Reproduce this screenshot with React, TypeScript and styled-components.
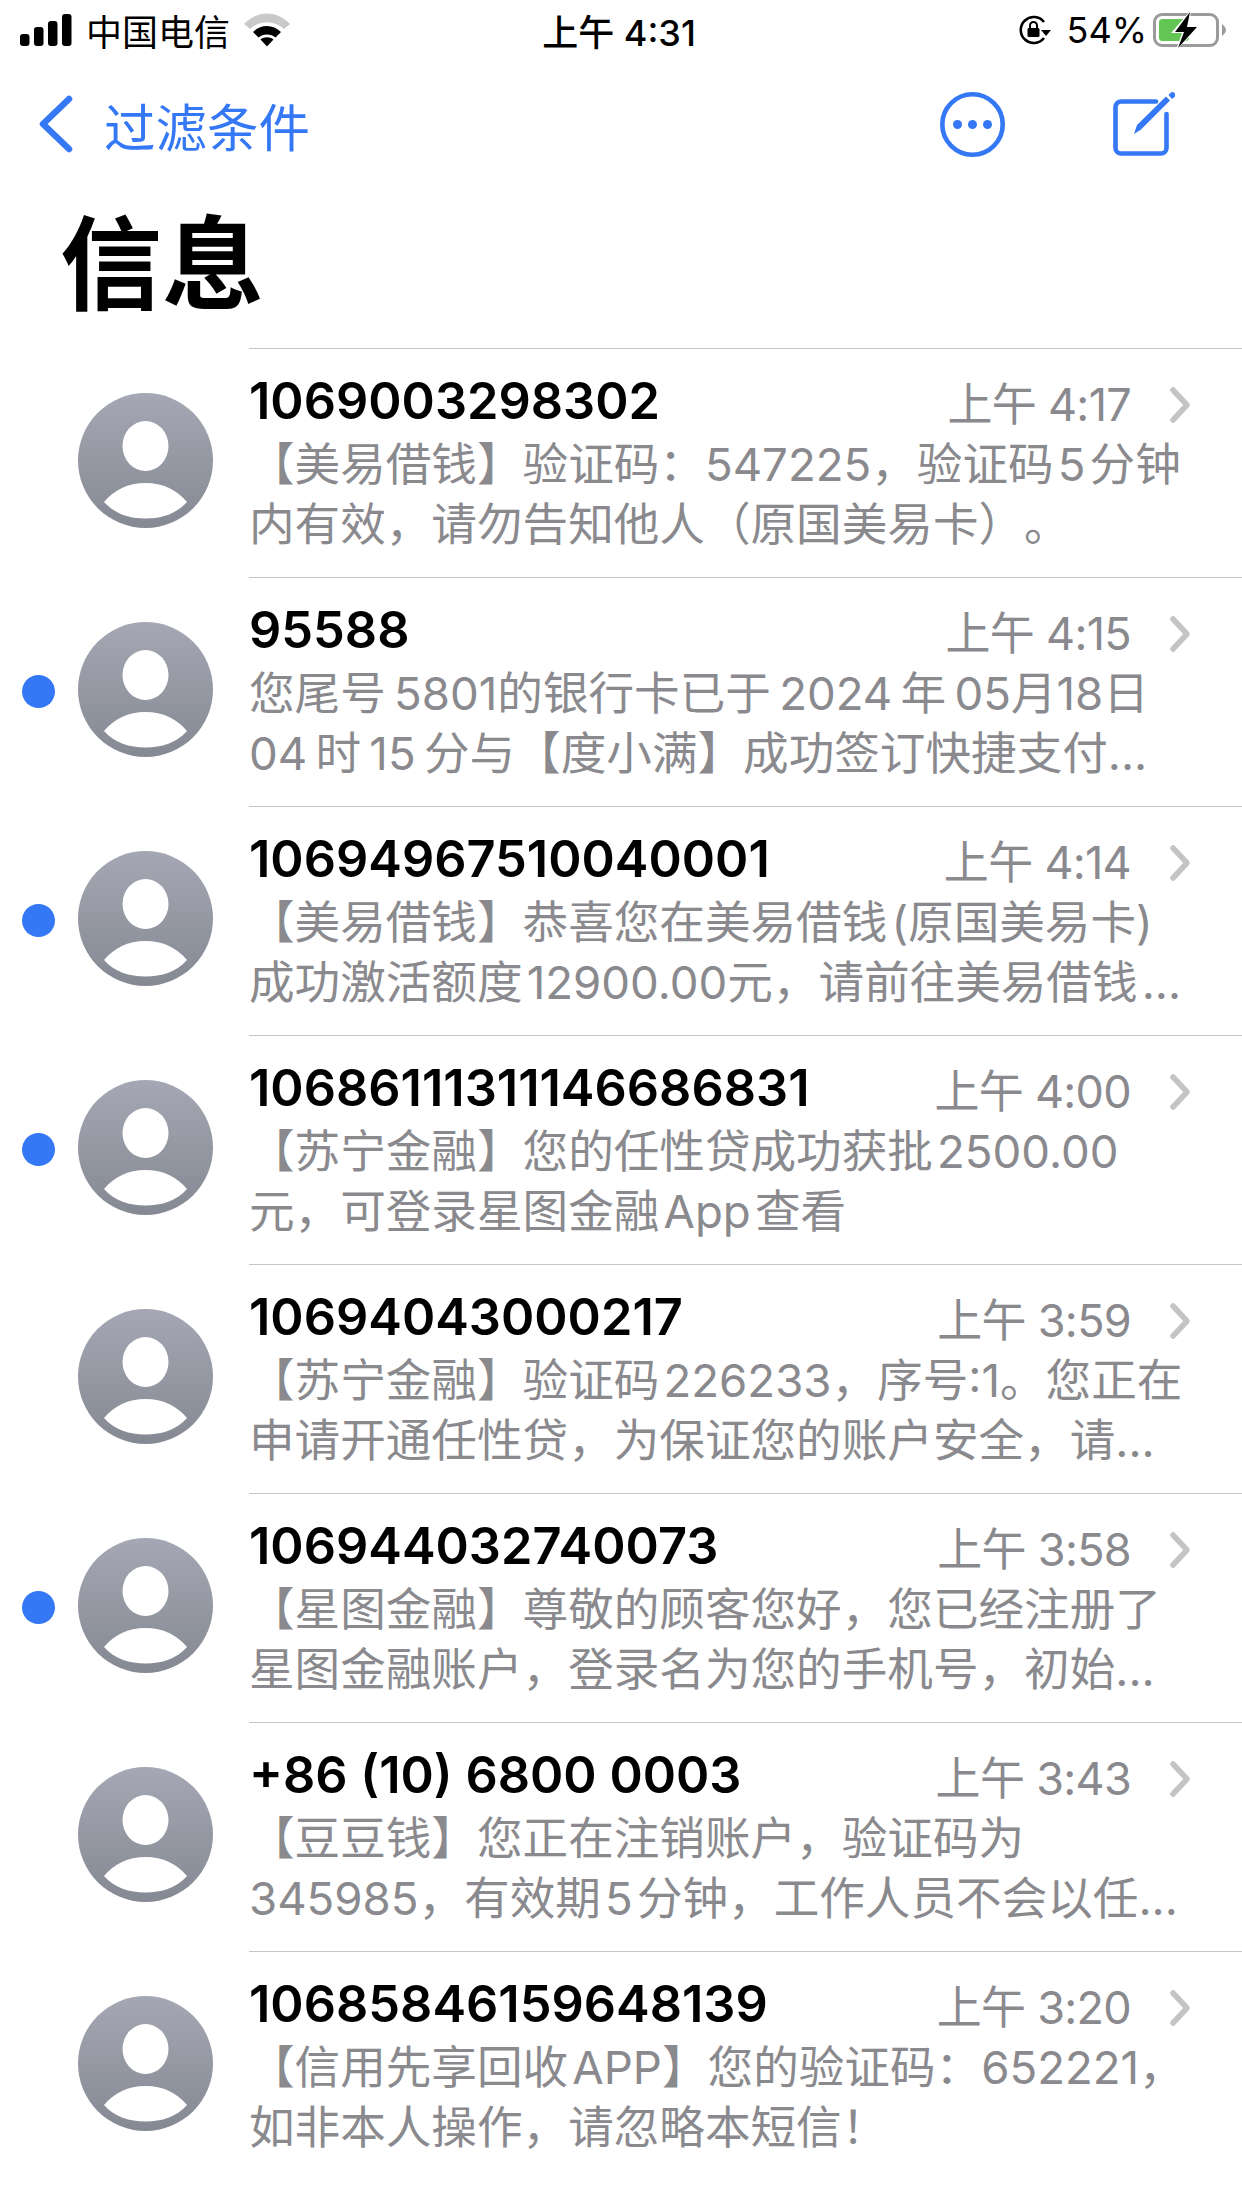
import styled, { createGlobalStyle } from "styled-components";

const GlobalStyle = createGlobalStyle`
  html, body {
    margin: 0;
    padding: 0;
    background: #fff;
  }
  body {
    font-family: "Inter", "Noto Sans CJK SC", sans-serif;
    text-spacing-trim: space-all;
    -webkit-font-smoothing: antialiased;
  }
`;

const BLUE = "#3478f6";

const Page = styled.div`
  width: 1242px;
  height: 2208px;
  overflow: hidden;
  background: #fff;
`;

const StatusBar = styled.div`
  height: 60px;
  display: grid;
  grid-template-columns: 1fr auto 1fr;
  align-items: center;
  padding: 0 16px 0 20px;
  color: #000;
  font-size: 36px;
`;

const StatusLeft = styled.div`
  display: flex;
  align-items: center;
  gap: 14px;
`;

const StatusCenter = styled.div`
  font-weight: 500;
  font-size: 36px;
  margin-right: 8px;
`;

const StatusRight = styled.div`
  display: flex;
  align-items: center;
  justify-content: flex-end;
  gap: 6px;
`;

const LockSlot = styled.div`
  display: flex;
  margin-right: 9px;
`;

const NavBar = styled.div`
  height: 90px;
  margin-top: 19px;
  display: flex;
  align-items: center;
  padding: 0 67px 0 39px;
`;

const BackLink = styled.div`
  display: flex;
  align-items: center;
  gap: 31px;
  flex: 1;
  color: ${BLUE};
  font-size: 51.5px;
`;

const NavActions = styled.div`
  display: flex;
  align-items: center;
  gap: 108px;
`;

const Title = styled.h1`
  margin: 0;
  height: 142px;
  padding: 37px 0 0 60px;
  font-size: 102px;
  line-height: 118px;
  font-weight: 700;
  color: #000;
`;

const List = styled.div`
  display: flex;
  flex-direction: column;
`;

const Row = styled.div`
  height: 229px;
  display: flex;
  align-items: stretch;
`;

const Gutter = styled.div`
  width: 78px;
  display: flex;
  align-items: center;
  padding-left: 22px;
  box-sizing: border-box;
`;

const UnreadDot = styled.div<{ $on: boolean }>`
  width: 33px;
  height: 33px;
  border-radius: 50%;
  background: ${(p) => (p.$on ? BLUE : "transparent")};
`;

const AvatarCell = styled.div`
  width: 171px;
  display: flex;
  align-items: center;
  padding-bottom: 4px;
  box-sizing: border-box;
`;

const Body = styled.div`
  flex: 1;
  border-top: 1.5px solid #c6c6c8;
  padding: 21px 50px 0 0;
  min-width: 0;
`;

const Head = styled.div`
  display: flex;
  align-items: center;
  height: 60px;
  margin-bottom: 5px;
`;

const Sender = styled.div`
  flex: 1;
  font-size: 50.5px;
  font-weight: 600;
  color: #000;
  white-space: nowrap;
`;

const Time = styled.div`
  color: #8a8a8e;
  font-size: 45px;
  letter-spacing: -0.7px;
  padding-top: 3px;
  white-space: nowrap;
`;

const Chevron = styled.svg`
  margin: 9px 0 0 37px;
`;

const Preview = styled.div`
  font-size: 45.6px;
  line-height: 60px;
  color: #8a8a8e;
  white-space: pre;
`;

interface Message {
  sender: string;
  time: string;
  lines: [string, string];
  unread: boolean;
}

const messages: Message[] = [
  {
    sender: "1069003298302",
    time: "上午 4:17",
    lines: ["【美易借钱】验证码：547225，验证码\u200a5\u200a分钟", "内有效，请勿告知他人（原国美易卡）。"],
    unread: false,
  },
  {
    sender: "95588",
    time: "上午 4:15",
    lines: ["您尾号\u20095801的银行卡已于\u20092024\u2009年\u200905月18日", "04\u2009时\u200915\u2009分与【度小满】成功签订快捷支付..."],
    unread: true,
  },
  {
    sender: "10694967510040001",
    time: "上午 4:14",
    lines: ["【美易借钱】恭喜您在美易借钱\u200a(原国美易卡)", "成功激活额度\u200a12900.00元，请前往美易借钱\u200a..."],
    unread: true,
  },
  {
    sender: "10686111311146686831",
    time: "上午 4:00",
    lines: ["【苏宁金融】您的任性贷成功获批\u200a2500.00", "元，可登录星图金融\u200aApp\u200a查看"],
    unread: true,
  },
  {
    sender: "10694043000217",
    time: "上午 3:59",
    lines: ["【苏宁金融】验证码\u200a226233，序号:1。您正在", "申请开通任性贷，为保证您的账户安全，请..."],
    unread: false,
  },
  {
    sender: "106944032740073",
    time: "上午 3:58",
    lines: ["【星图金融】尊敬的顾客您好，您已经注册了", "星图金融账户，登录名为您的手机号，初始..."],
    unread: true,
  },
  {
    sender: "+86 (10) 6800 0003",
    time: "上午 3:43",
    lines: ["【豆豆钱】您正在注销账户，验证码为", "345985，有效期\u200a5\u200a分钟，工作人员不会以任..."],
    unread: false,
  },
  {
    sender: "10685846159648139",
    time: "上午 3:20",
    lines: ["【信用先享回收\u200aAPP】您的验证码：652221，", "如非本人操作，请忽略本短信！"],
    unread: false,
  },
];

function Avatar() {
  return (
    <svg width="135" height="135" viewBox="0 0 135 135">
      <defs>
        <linearGradient id="avatarFill" x1="0" y1="0" x2="0" y2="1">
          <stop offset="0" stopColor="#a5a8b4" />
          <stop offset="1" stopColor="#858993" />
        </linearGradient>
      </defs>
      <circle cx="67.5" cy="67.5" r="67.5" fill="url(#avatarFill)" />
      <ellipse cx="67.5" cy="53" rx="23" ry="25" fill="#fff" />
      <path d="M26 109 C36 97 50 90 67.5 90 C85 90 99 97 109 109 C98 121 84 125.5 67.5 125.5 C51 125.5 37 121 26 109 Z" fill="#fff" />
    </svg>
  );
}

function SignalIcon() {
  return (
    <svg width="52" height="32" viewBox="0 0 52 32" fill="#000">
      <rect x="0" y="20" width="9.5" height="12" rx="3" />
      <rect x="14" y="13" width="9.5" height="19" rx="3" />
      <rect x="28" y="7" width="9.5" height="25" rx="3" />
      <rect x="42" y="0" width="9.5" height="32" rx="3" />
    </svg>
  );
}

function WifiIcon() {
  return (
    <svg width="46" height="34" viewBox="0 0 46 34">
      <path d="M0 11 C13 -3 33 -3 46 11 L40 16 C30 7 16 7 6 16 Z" fill="#c9c9c9" />
      <path d="M9 19 C17 11 29 11 37 19 L31.5 24.5 C27 20.5 19 20.5 14.5 24.5 Z" fill="#000" />
      <path d="M16.5 26.5 C20 23.5 26 23.5 29.5 26.5 L23 33.5 Z" fill="#000" />
    </svg>
  );
}

function LockRotationIcon() {
  return (
    <svg width="34" height="30" viewBox="0 0 34 30">
      <path d="M26 7 A13 13 0 1 0 26 23" fill="none" stroke="#000" strokeWidth="2.6" />
      <path d="M23 15 L33 15 L28 21 Z" fill="#000" />
      <rect x="9.5" y="13" width="12" height="9" rx="1.5" fill="#000" />
      <path d="M12 13 V10.5 A3.5 3.5 0 0 1 19 10.5 V13" fill="none" stroke="#000" strokeWidth="2" />
    </svg>
  );
}

function BatteryIcon() {
  return (
    <svg width="73" height="36" viewBox="0 0 73 36">
      <rect x="1.5" y="2.5" width="63" height="31" rx="7.5" fill="none" stroke="#9b9b9b" strokeWidth="3" />
      <path d="M69 12 C71.5 14 73 16 73 18 C73 20 71.5 22 69 24 Z" fill="#9b9b9b" />
      <rect x="6" y="7" width="30" height="22" rx="3.5" fill="#62c554" />
      <path d="M38 -2 L18 21 L29 21 L23 38 L48 14 L36 14 Z" fill="#fff" />
      <path d="M37 0 L22 20 L31 20 L25 36 L44 15 L34 15 Z" fill="#000" />
    </svg>
  );
}

function BackChevron() {
  return (
    <svg width="34" height="58" viewBox="0 0 34 58">
      <path d="M30 4 L4 29 L30 54" fill="none" stroke={BLUE} strokeWidth="6.5" strokeLinecap="round" strokeLinejoin="round" />
    </svg>
  );
}

function MoreIcon() {
  return (
    <svg width="65" height="65" viewBox="0 0 65 65">
      <circle cx="32.5" cy="32.5" r="30.2" fill="none" stroke={BLUE} strokeWidth="4.6" />
      <circle cx="17.5" cy="32.5" r="4.5" fill={BLUE} />
      <circle cx="32.5" cy="32.5" r="4.5" fill={BLUE} />
      <circle cx="47.5" cy="32.5" r="4.5" fill={BLUE} />
    </svg>
  );
}

function ComposeIcon() {
  return (
    <svg width="62" height="64" viewBox="0 0 62 64">
      <path d="M43 9.5 H8 A5.5 5.5 0 0 0 2.5 15 V56 A5.5 5.5 0 0 0 8 61.5 H48 A5.5 5.5 0 0 0 53.5 56 V22" fill="none" stroke={BLUE} strokeWidth="4.6" strokeLinecap="round" />
      <path d="M21 42 L24 33 L53 4.5 L57 8.5 L28 37.5 Z" fill={BLUE} />
      <path d="M55.5 3 L57.5 1 A2.5 2.5 0 0 1 61.5 5 L59 7 Z" fill={BLUE} />
    </svg>
  );
}

function RowChevron() {
  return (
    <Chevron width="24" height="38" viewBox="0 0 24 38">
      <path d="M5 4 L19 19 L5 34" fill="none" stroke="#c4c4c7" strokeWidth="5.5" strokeLinecap="round" strokeLinejoin="round" />
    </Chevron>
  );
}

export default function App() {
  return (
    <Page>
      <GlobalStyle />
      <StatusBar>
        <StatusLeft>
          <SignalIcon />
          <span>中国电信</span>
          <WifiIcon />
        </StatusLeft>
        <StatusCenter>上午 4:31</StatusCenter>
        <StatusRight>
          <LockSlot>
            <LockRotationIcon />
          </LockSlot>
          <span>54%</span>
          <BatteryIcon />
        </StatusRight>
      </StatusBar>
      <NavBar>
        <BackLink>
          <BackChevron />
          <span>过滤条件</span>
        </BackLink>
        <NavActions>
          <MoreIcon />
          <ComposeIcon />
        </NavActions>
      </NavBar>
      <Title>信息</Title>
      <List>
        {messages.map((m) => (
          <Row key={m.sender}>
            <Gutter>
              <UnreadDot $on={m.unread} />
            </Gutter>
            <AvatarCell>
              <Avatar />
            </AvatarCell>
            <Body>
              <Head>
                <Sender>{m.sender}</Sender>
                <Time>{m.time}</Time>
                <RowChevron />
              </Head>
              <Preview>{m.lines[0]}</Preview>
              <Preview>{m.lines[1]}</Preview>
            </Body>
          </Row>
        ))}
      </List>
    </Page>
  );
}
